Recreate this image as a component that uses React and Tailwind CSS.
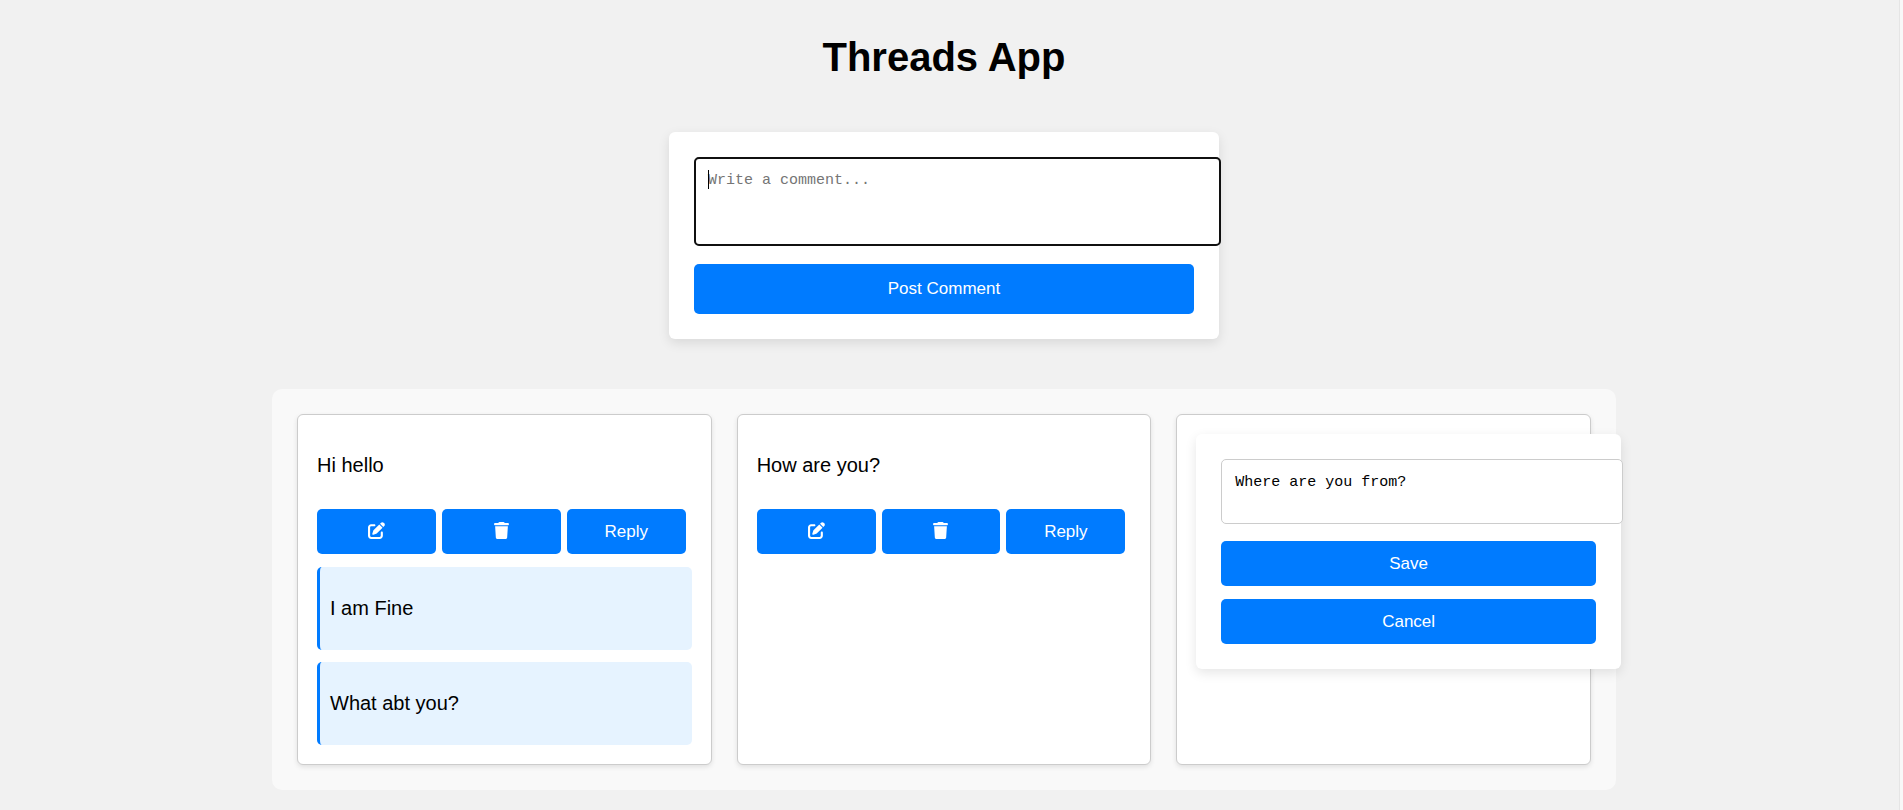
import { useState } from "react";
import { FaPenToSquare, FaTrash } from "react-icons/fa6";

const BUTTON =
  "flex w-full items-center justify-center rounded-[5px] bg-[#007bff] text-[17px] leading-5 text-white";
const TEXTAREA =
  "block w-[calc(100%+27px)] resize-none rounded-[5px] border border-[#ccc] bg-white p-[13px] font-['Liberation_Mono',monospace] text-[15px] leading-[19px] placeholder:text-[#757575]";
const PANEL = "rounded-[6px] bg-white p-[25px] shadow-[0_4px_12px_rgba(0,0,0,0.1)]";

function CommentForm() {
  return (
    <form
      className={`mx-auto w-[550px] ${PANEL}`}
      onSubmit={(e) => e.preventDefault()}
    >
      <div className="relative mb-[18px]">
        <textarea
          autoFocus
          aria-label="Comment"
          placeholder="Write a comment..."
          className={`peer ${TEXTAREA} h-[89px] outline-2 -outline-offset-2 outline-[#101010] placeholder-shown:caret-transparent`}
        />
        <span
          aria-hidden="true"
          className="pointer-events-none absolute top-[13px] left-[14px] hidden h-[19px] w-px bg-black peer-placeholder-shown:block"
        />
      </div>
      <button type="submit" className={`${BUTTON} h-[50px]`}>
        Post Comment
      </button>
    </form>
  );
}

function EditForm({ text }) {
  const [value, setValue] = useState(text);
  return (
    <form
      className={`w-[calc(100%+50px)] ${PANEL}`}
      onSubmit={(e) => e.preventDefault()}
    >
      <textarea
        aria-label="Edit comment"
        value={value}
        onChange={(e) => setValue(e.target.value)}
        className={`${TEXTAREA} mb-[17px] h-[65px] text-black`}
      />
      <button type="submit" className={`${BUTTON} mb-[13px] h-[45px]`}>
        Save
      </button>
      <button type="button" className={`${BUTTON} h-[45px]`}>
        Cancel
      </button>
    </form>
  );
}

function Comment({ text, replies }) {
  return (
    <>
      <p className="my-5">{text}</p>
      <div className="mt-8 mb-[13px] flex gap-[6px] pr-[6px]">
        <button type="button" aria-label="Edit" className={`${BUTTON} h-[45px] pb-0.5`}>
          <FaPenToSquare />
        </button>
        <button type="button" aria-label="Delete" className={`${BUTTON} h-[45px] pb-0.5`}>
          <FaTrash />
        </button>
        <button type="button" className={`${BUTTON} h-[45px]`}>
          Reply
        </button>
      </div>
      <div className="flex flex-col gap-3">
        {replies.map((reply) => (
          <p
            key={reply}
            className="rounded-[5px] border-l-[3px] border-[#007bff] bg-[#e6f3ff] px-[10px] py-[30px]"
          >
            {reply}
          </p>
        ))}
      </div>
    </>
  );
}

const COMMENTS = [
  { text: "Hi hello", replies: ["I am Fine", "What abt you?"] },
  { text: "How are you?", replies: [] },
  { text: "Where are you from?", replies: [], editing: true },
];

export default function App() {
  return (
    <div className="flex min-h-screen bg-[#f1f1f1] font-['Liberation_Sans',Arial,sans-serif] text-black">
      <main className="min-w-0 flex-1 pt-[34px] pr-[11px] pb-5">
        <h1 className="mb-[52px] text-center text-[40px] leading-[46px] font-bold">
          Threads App
        </h1>
        <CommentForm />
        <section className="mx-auto mt-[50px] grid max-w-[1344px] grid-cols-3 gap-[25px] rounded-[10px] bg-[#f9f9f9] p-[25px] text-xl leading-[23px]">
          {COMMENTS.map((c) => (
            <article
              key={c.text}
              className="min-w-0 rounded-[6px] border border-[#ccc] bg-white p-[19px] shadow-[0_2px_5px_rgba(0,0,0,0.1)]"
            >
              {c.editing ? <EditForm text={c.text} /> : <Comment {...c} />}
            </article>
          ))}
        </section>
      </main>
      <div className="w-1 shrink-0 border-l border-[#e5e5e5] bg-[#f8f8f8]" />
    </div>
  );
}
